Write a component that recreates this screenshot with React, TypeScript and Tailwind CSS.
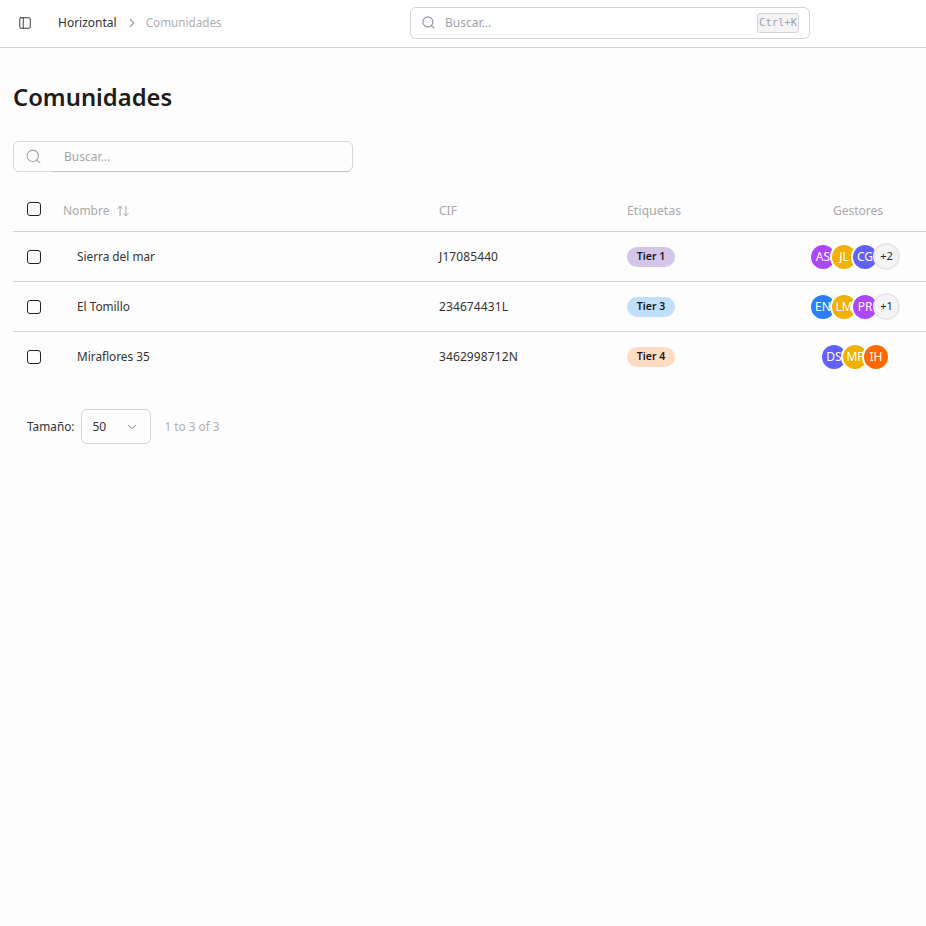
import React from 'react';
import { PanelLeft, ChevronRight, ChevronDown, Search, ArrowUpDown } from 'lucide-react';

type Manager = { initials: string; color: string };

type Row = {
  name: string;
  cif: string;
  tier: string;
  tierColor: string;
  managers: Manager[];
  extra?: string;
};

const rows: Row[] = [
  {
    name: 'Sierra del mar',
    cif: 'J17085440',
    tier: 'Tier 1',
    tierColor: 'bg-[#d3c6e8]',
    managers: [
      { initials: 'AS', color: 'bg-purple-500' },
      { initials: 'JL', color: 'bg-yellow-500' },
      { initials: 'CG', color: 'bg-indigo-500' },
    ],
    extra: '+2',
  },
  {
    name: 'El Tomillo',
    cif: '234674431L',
    tier: 'Tier 3',
    tierColor: 'bg-[#bfdffb]',
    managers: [
      { initials: 'EN', color: 'bg-blue-500' },
      { initials: 'LM', color: 'bg-yellow-500' },
      { initials: 'PR', color: 'bg-purple-500' },
    ],
    extra: '+1',
  },
  {
    name: 'Miraflores 35',
    cif: '3462998712N',
    tier: 'Tier 4',
    tierColor: 'bg-[#fedcc3]',
    managers: [
      { initials: 'DS', color: 'bg-indigo-500' },
      { initials: 'MF', color: 'bg-yellow-500' },
      { initials: 'IH', color: 'bg-orange-500' },
    ],
  },
];

const Check = () => (
  <span className="block w-[14px] h-[14px] rounded-[3px] border border-[#1f2328] bg-white shrink-0" />
);

const App: React.FC = () => {
  return (
    <div className="min-h-[926px] bg-[#fdfdfd] text-[#1f2328] font-['Noto_Sans',sans-serif] text-[12px]">
      <header className="h-[48px] flex items-center border-b border-[#d4d4d4] pb-[2px] bg-white">
        <div className="w-[410px] flex items-center pl-[18px]">
          <PanelLeft size={14} strokeWidth={1.5} className="text-[#27272a]" />
          <span className="ml-[26px] text-[#333333]">Horizontal</span>
          <ChevronRight size={14} className="ml-[8px] text-[#a3a3a3]" />
          <span className="ml-[7px] text-[11.7px] text-[#b0b0b0]">Comunidades</span>
        </div>
        <div className="w-[400px] h-[32px] flex items-center rounded-md border border-[#d4d4d8] pl-[10px] pr-[10px]">
          <Search size={15} strokeWidth={1.75} className="text-[#8b95a1]" />
          <span className="ml-[9px] text-[#9ca3af]">Buscar...</span>
          <kbd className="ml-auto h-[20px] px-[1px] flex items-center rounded-[3px] border border-[#d4d4d8] bg-[#f4f4f5] text-[#9ca3af] text-[10.5px] font-['DejaVu_Sans_Mono',monospace]">
            Ctrl+K
          </kbd>
        </div>
      </header>

      <main className="pl-[13px] pt-[33px]">
        <h1 className="text-[23.8px] leading-[32px] font-semibold text-[#1c1c1c]">Comunidades</h1>

        <div className="mt-[28px] w-[340px] h-[31px] flex items-center rounded-md border border-[#d8d8d8]">
          <span className="w-[38px] flex justify-center">
            <Search size={17} strokeWidth={1.5} className="text-[#a3a3a3]" />
          </span>
          <span className="flex-1 self-stretch flex items-center pl-[12px] rounded-r-md text-[#a8a8a8] shadow-[0_2px_2px_-1px_rgba(0,0,0,0.14)]">
            Buscar...
          </span>
        </div>

        <div className="mt-[19px]">
          <div className="grid grid-cols-[50px_376px_188px_158px_141px] h-[41px] items-center border-b border-[#d4d4d4] text-[#a8a8a8]">
            <span className="pl-[14px] pb-[5px]">
              <Check />
            </span>
            <span className="flex items-center gap-[7px]">
              Nombre
              <ArrowUpDown size={14} strokeWidth={1.5} className="text-[#9a9a9a]" />
            </span>
            <span>CIF</span>
            <span className="tracking-[0.2px]">Etiquetas</span>
            <span className="text-center pl-[5px]">Gestores</span>
          </div>

          {rows.map((row, i) => (
            <div
              key={row.name}
              className={`grid grid-cols-[50px_376px_188px_158px_141px] h-[50px] items-center ${
                i < rows.length - 1 ? 'border-b border-[#d4d4d4]' : ''
              }`}
            >
              <span className="pl-[14px]">
                <Check />
              </span>
              <span className="pl-[14px] text-[11.8px] text-[#333333]">{row.name}</span>
              <span className="text-[#333333] tracking-[0.1px]">{row.cif}</span>
              <span>
                <span
                  className={`inline-flex items-center justify-center w-[48px] h-[20px] rounded-full text-[10.5px] font-semibold text-[#18181b] ${row.tierColor}`}
                >
                  {row.tier}
                </span>
              </span>
              <div className={`flex justify-center items-center ${row.extra ? '' : 'pr-[1px]'}`}>
                {row.managers.map((m, j) => (
                  <span
                    key={m.initials}
                    className={`w-[24px] h-[24px] rounded-full flex items-center justify-center text-white text-[12px] overflow-hidden ${m.color} ${
                      j > 0 ? '-ml-[3px] ring-2 ring-white' : ''
                    }`}
                  >
                    {m.initials}
                  </span>
                ))}
                {row.extra && (
                  <span className="relative -ml-[4px] w-[27px] h-[27px] rounded-full flex items-center justify-center bg-[#f4f4f5] border-2 border-[#e8e8e8] text-[11px] text-[#27272a]">
                    {row.extra}
                  </span>
                )}
              </div>
            </div>
          ))}
        </div>

        <div className="mt-[27px] ml-[14px] flex items-center text-[#333333]">
          <span className="text-[11.8px]">Tamaño:</span>
          <div className="ml-[7px] w-[70px] h-[35px] flex items-center rounded-md border border-[#d4d4d4] pl-[10px]">
            50
            <ChevronDown size={14} strokeWidth={1.5} className="ml-auto mr-[11px] text-[#71717a]" />
          </div>
          <span className="ml-[13px] text-[11.8px] text-[#b0b0b0]">1 to 3 of 3</span>
        </div>
      </main>
    </div>
  );
};

export default App;
